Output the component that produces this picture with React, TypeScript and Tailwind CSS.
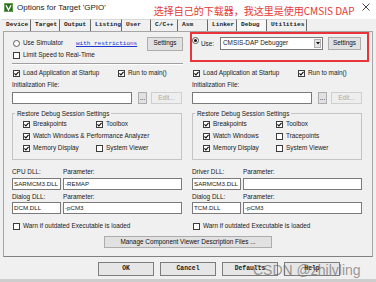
import React from "react";

const SANS = "font-['Liberation_Sans',Arial,sans-serif]";
const MONO = "font-['Liberation_Mono','Courier_New',monospace]";

function Check({ on }: { on?: boolean }) {
  return (
    <span className="w-[7px] h-[7px] border border-[#3c3c3c] bg-white flex items-center justify-center shrink-0">
      {on && (
        <svg width="5" height="5" viewBox="0 0 5 5">
          <path d="M0.4 2.4 L1.9 3.9 L4.6 0.8" stroke="#111" strokeWidth="1.2" fill="none" />
        </svg>
      )}
    </span>
  );
}

function CheckRow({ on, label, className = "" }: { on?: boolean; label: string; className?: string }) {
  return (
    <div className={`flex items-center ${className}`}>
      <Check on={on} />
      <span className="ml-[3px] text-[6.4px] leading-none whitespace-nowrap">{label}</span>
    </div>
  );
}

function Radio({ on }: { on?: boolean }) {
  return (
    <span className="w-[7px] h-[7px] rounded-full border border-[#5a5a5a] bg-white flex items-center justify-center shrink-0">
      {on && <span className="w-[3px] h-[3px] rounded-full bg-[#111]" />}
    </span>
  );
}

function Btn({ children, className = "", disabled }: { children: React.ReactNode; className?: string; disabled?: boolean }) {
  return (
    <div
      className={`flex items-center justify-center border text-[6.4px] leading-none whitespace-nowrap ${
        disabled ? "border-[#cfcfcf] bg-[#eeeeee] text-[#a8a8a8]" : "border-[#adadad] bg-[#e1e1e1] text-[#111]"
      } ${className}`}
    >
      {children}
    </div>
  );
}

function Input({ value, className = "" }: { value?: string; className?: string }) {
  return (
    <div className={`h-[12px] border border-[#7a7a7a] bg-white flex items-center px-[1px] text-[6.2px] leading-none whitespace-nowrap overflow-hidden ${className}`}>
      {value}
    </div>
  );
}

function Rest({ right }: { right?: boolean }) {
  return (
    <>
      <div className="mt-[4px] h-[8px] flex items-center">
        <div className="w-[106px] pl-[1px]">
          <CheckRow on label="Load Application at Startup" />
        </div>
        <CheckRow on label="Run to main()" />
      </div>
      <div className="mt-[4px] h-[8px] flex items-center text-[6.4px] leading-none">Initialization File:</div>
      <div className="mt-[3px] h-[12px] flex">
        <Input className="w-[120px]" />
        <Btn className="ml-[6px] w-[9px] h-[12px]">...</Btn>
        <Btn disabled className="ml-[4px] w-[31px] h-[12px]">
          Edit...
        </Btn>
      </div>
      <div className="mt-[9px] w-[170px] border border-[#c4c4c4] pb-[5px]">
        <div className="-mt-[4px] ml-[2px] px-[2px] w-fit h-[8px] bg-[#f0f0f0] flex items-center text-[6.4px] leading-none whitespace-nowrap">
          Restore Debug Session Settings
        </div>
        <div className="pl-[10px] grid grid-cols-[73px_auto]">
          <CheckRow on label="Breakpoints" className="h-[12px]" />
          <CheckRow on label="Toolbox" className="h-[12px]" />
          {right ? (
            <>
              <CheckRow on label="Watch Windows" className="h-[12px]" />
              <CheckRow label="Tracepoints" className="h-[12px]" />
            </>
          ) : (
            <div className="col-span-2">
              <CheckRow on label="Watch Windows & Performance Analyzer" className="h-[12px]" />
            </div>
          )}
          <CheckRow on label="Memory Display" className="h-[12px]" />
          <CheckRow label="System Viewer" className="h-[12px]" />
        </div>
      </div>
      <div className="mt-[8px] h-[8px] flex items-center text-[6.4px] leading-none">
        <span className="w-[51px]">{right ? "Driver DLL:" : "CPU DLL:"}</span>
        <span>Parameter:</span>
      </div>
      <div className="mt-[2px] h-[12px] flex">
        <Input className="w-[49px]" value="SARMCM3.DLL" />
        <Input className="ml-[2px] w-[119px]" value={right ? "" : "-REMAP"} />
      </div>
      <div className="mt-[3px] h-[8px] flex items-center text-[6.4px] leading-none">
        <span className="w-[51px]">Dialog DLL:</span>
        <span>Parameter:</span>
      </div>
      <div className="mt-[1px] h-[12px] flex">
        <Input className="w-[49px]" value={right ? "TCM.DLL" : "DCM.DLL"} />
        <Input className="ml-[2px] w-[119px]" value="-pCM3" />
      </div>
      <div className="mt-[8px] h-[8px] pl-[1px] flex items-center">
        <CheckRow label="Warn if outdated Executable is loaded" />
      </div>
    </>
  );
}

const tabs: [string, number][] = [
  ["Device", 29],
  ["Target", 29],
  ["Output", 31],
  ["Listing", 31],
  ["User", 29],
  ["C/C++", 27],
  ["Asm", 30],
  ["Linker", 29],
  ["Debug", 30],
  ["Utilities", 40],
];

export default function App() {
  return (
    <div className={`relative w-[376px] h-[282px] bg-[#f0f0f0] overflow-hidden flex flex-col text-[#1a1a1a] ${SANS}`}>
      {/* Title bar */}
      <div className="h-[19px] bg-white flex items-start shrink-0">
        <svg className="ml-[4px] mt-[3px]" width="9" height="9" viewBox="0 0 9 9">
          <rect x="0" y="0" width="9" height="9" fill="#2f6b2a" />
          <rect x="0.5" y="0.5" width="8" height="8" fill="none" stroke="#8bbf6a" strokeWidth="0.6" />
          <path d="M2 2.2 L4.5 7 L7 2.2" stroke="#ffffff" strokeWidth="1.3" fill="none" />
        </svg>
        <span className="ml-[4px] mt-[3px] text-[8px] leading-[9px] whitespace-nowrap">Options for Target 'GPIO'</span>
        <span className="ml-[48px] mt-[5px] text-[10px] leading-[12px] whitespace-nowrap text-[#e53935] font-['Noto_Sans_CJK_SC','Liberation_Sans',sans-serif]">
          选择自己的下载器，我这里是使用CMSIS DAP
        </span>
        <svg className="ml-auto mr-[6px] mt-[3px]" width="8" height="8" viewBox="0 0 8 8">
          <path d="M0.5 0.5 L7.5 7.5 M7.5 0.5 L0.5 7.5" stroke="#333" strokeWidth="0.9" />
        </svg>
      </div>

      {/* Tabs */}
      <div className="h-[12px] pl-[2px] flex shrink-0">
        {tabs.map(([t, w]) => (
          <div
            key={t}
            style={{ width: w }}
            className={`h-[12px] flex items-center pl-[4px] border-r border-[#6a6a6a] border-t border-t-[#d8d8d8] text-[6.2px] leading-none font-bold whitespace-nowrap ${MONO} ${
              t === "Debug" ? "bg-[#f7f7f7]" : ""
            }`}
          >
            {t}
          </div>
        ))}
      </div>

      {/* Panel */}
      <div className="ml-[3px] w-[370px] h-[226px] border border-[#a6a6a6] border-b-[#808080] flex flex-col shrink-0">
        <div className="flex pl-[8px]">
          {/* Left column */}
          <div className="w-[171px] flex flex-col">
            <div className="h-[31px] pt-[4px] flex flex-col">
              <div className="h-[15px] flex items-center">
                <span className="ml-[1px]">
                  <Radio />
                </span>
                <span className="ml-[3px] w-[53px] text-[6.4px] leading-none whitespace-nowrap">Use Simulator</span>
                <span className={`text-[6px] leading-none text-[#1a36d0] underline whitespace-nowrap ${MONO}`}>with restrictions</span>
                <Btn className="ml-auto w-[36px] h-[14px]">Settings</Btn>
              </div>
              <div className="h-[8px] pl-[1px] flex items-center">
                <CheckRow label="Limit Speed to Real-Time" />
              </div>
            </div>
            <div className="h-[2px] border-t border-[#a0a0a0] border-b border-b-white" />
            <Rest />
          </div>

          {/* Right column */}
          <div className="ml-[9px] w-[171px] flex flex-col">
            <div className="-ml-[2px] w-[179px] h-[30px] border-2 border-[#e8353a] flex items-start pt-[3px]">
              <Radio on />
              <span className="ml-[2px] w-[19px] text-[6.4px] leading-[13px] whitespace-nowrap">Use:</span>
              <div className="w-[103px] h-[13px] border border-[#7a7a7a] bg-white flex items-center">
                <span className="pl-[2px] text-[6.4px] leading-none whitespace-nowrap flex-1">CMSIS-DAP Debugger</span>
                <span className="w-[7px] h-[9px] mr-[1px] bg-[#e4e4e4] border border-[#b0b0b0] flex items-center justify-center">
                  <svg width="4" height="3" viewBox="0 0 4 3">
                    <path d="M0 0 L4 0 L2 2.5 Z" fill="#111" />
                  </svg>
                </span>
              </div>
              <Btn className="ml-[5px] w-[33px] h-[13px]">Settings</Btn>
            </div>
            <div className="h-[3px]" />
            <Rest right />
          </div>
        </div>
        <Btn className="mt-[6px] mx-auto w-[168px] h-[12px]">Manage Component Viewer Description Files ...</Btn>
      </div>

      {/* Bottom buttons */}
      <div className="mt-[5px] pl-[98px] flex gap-[6px] shrink-0">
        {["OK", "Cancel", "Defaults", "Help"].map((b) => (
          <div
            key={b}
            className={`w-[56px] h-[14px] border border-[#7d7d7d] bg-[#e6e6e6] flex items-center justify-center text-[6.4px] leading-none font-bold ${MONO}`}
          >
            {b}
          </div>
        ))}
      </div>
      <div className="mt-auto h-[3px] bg-[#cdcdcd] shrink-0" />

      {/* Watermark */}
      <div className="absolute left-[253px] top-[262px] text-[14px] leading-[16px] whitespace-nowrap text-[rgba(110,110,110,0.7)] font-['Liberation_Sans',sans-serif]">
        CSDN @zhilvling
      </div>
    </div>
  );
}
